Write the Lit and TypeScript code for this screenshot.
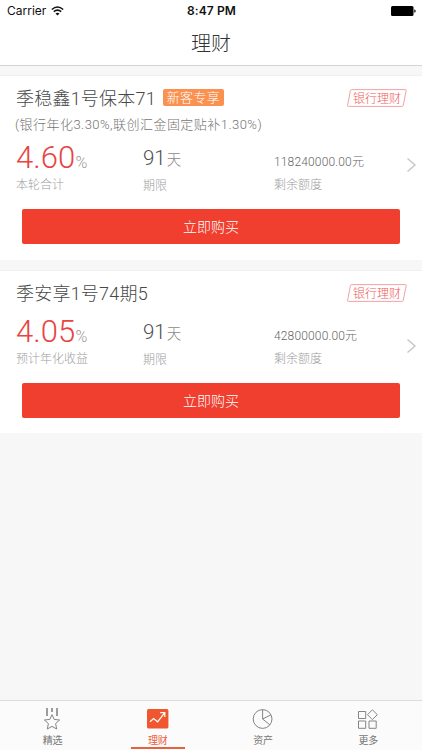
import { LitElement, html, css, svg, nothing } from "lit";
import { customElement, property } from "lit/decorators.js";
import { classMap } from "lit/directives/class-map.js";

interface Product {
  name: string;
  badge?: string;
  note?: string;
  rate: string;
  rateLabel: string;
  days: string;
  quota: string;
}

const products: Product[] = [
  { name: "季稳鑫1号保本71", badge: "新客专享", note: "(银行年化3.30%,联创汇金固定贴补1.30%)", rate: "4.60", rateLabel: "本轮合计", days: "91", quota: "118240000.00" },
  { name: "季安享1号74期5", rate: "4.05", rateLabel: "预计年化收益", days: "91", quota: "42800000.00" },
];

const tabs = [
  { label: "精选", icon: svg`<path d="M5 1v8M10 1v4M15 1v8" stroke-width="1.6"/><path d="M10 7.7l2.2 4.7 5.4.6-4 3.6 1.1 5.4-4.7-2.6-4.7 2.6 1.1-5.4-4-3.6 5.4-.6z"/>` },
  { label: "理财", icon: svg`<rect x="0" y="2" width="21.4" height="19.4" rx="1.5" fill="#f1572f" stroke="none"/><path d="M3 14.8l3.6-3.2 4 3.2 6.8-8.6M13.2 5.7h4.6v4.4" stroke="#fff" stroke-width="1.2"/>` },
  { label: "资产", icon: svg`<circle cx="9.6" cy="12" r="9.4"/><path d="M9.6 2.6V12l8.4-4.2M9.6 12l7.2 5.8"/>` },
  { label: "更多", icon: svg`<path d="M.5 4.5h7.2v7H.5zM.5 14h7.2v7.3H.5zM11 14h7.2v7.3H11zM14.4 2.8l4.9 4.9-4.9 4.9-4.9-4.9z"/>` },
];

@customElement("product-card")
class ProductCard extends LitElement {
  @property({ attribute: false }) item!: Product;

  static styles = css`
    :host { display: block; background: #fff; border-top: 1px solid #f0f0f0; padding: 13px 16px 0; }
    .head { display: flex; align-items: center; height: 20px; }
    .name { font-size: 18px; line-height: 20px; letter-spacing: 0.22px; color: #484848; white-space: nowrap; }
    .badge { margin: -3px 0 0 7px; width: 61px; height: 17px; border-radius: 2px; background: #fb9150; color: #fff; font-size: 13px; line-height: 17px; letter-spacing: 0.4px; text-align: center; }
    .tag { position: relative; margin: -2px -1px 0 auto; width: 60px; height: 18px; font-size: 12px; line-height: 20px; text-align: center; color: #ee5a5a; }
    .outline { position: absolute; inset: 0; }
    .note { margin-left: -1px; margin-top: 8px; height: 14px; font-size: 13px; line-height: 15px; letter-spacing: 0.46px; color: #747474; white-space: nowrap; }
    .facts { display: grid; grid-template-columns: 127px 131px 1fr 10px; height: 62px; margin: 11px -10px 0 0; }
    .plain { margin-top: 12px; }
    .value { height: 30px; display: flex; align-items: baseline; line-height: 30px; white-space: nowrap; }
    .caption { font-size: 12px; line-height: 15px; color: #a0a0a0; margin-top: 6px; }
    .rate { font-size: 31px; line-height: 31px; letter-spacing: 0.1px; color: #e94444; }
    .percent { font-size: 16px; color: #999; }
    .term .value { padding-top: 1px; }
    .days { font-size: 20.5px; color: #505050; }
    .unit { font-size: 14.5px; color: #8a8a8a; margin-left: 1px; }
    .quota { height: 25px; padding-top: 5px; line-height: 31px; font-size: 12px; letter-spacing: 0.15px; color: #666; }
    .arrow { width: 11px; height: 16px; margin: 15px 0 0; }
    .plain .arrow { margin-top: 22px; }
    .buy { display: block; width: 378px; height: 35px; margin: 5px 0 0 6px; padding: 1px 0 0; border: 0; border-radius: 2px; background: #f03e2f; color: #fff; font: inherit; font-size: 14px; line-height: 34px; }
  `;

  render() {
    const p = this.item;
    return html`
      <div class="head">
        <span class="name">${p.name}</span>
        ${p.badge ? html`<span class="badge">${p.badge}</span>` : nothing}
        <span class="tag">
          <svg class="outline" width="60" height="18" viewBox="0 0 60 18" fill="none" stroke="#f08a8a" stroke-width=".8"><path d="M4.6.6h53.6q1.2 0 1 1l-3 14.8q-.2 1-1.4 1H1.6q-1.3 0-1-1L3.4 1.6q.2-1 1.2-1z"/></svg>银行理财
        </span>
      </div>
      ${p.note ? html`<div class="note">${p.note}</div>` : nothing}
      <div class=${classMap({ facts: true, plain: !p.note })}>
        <div><div class="value"><span class="rate">${p.rate}</span><span class="percent">%</span></div><div class="caption">${p.rateLabel}</div></div>
        <div class="term"><div class="value"><span class="days">${p.days}</span><span class="unit">天</span></div><div class="caption">期限</div></div>
        <div><div class="value quota">${p.quota}元</div><div class="caption">剩余额度</div></div>
        <svg class="arrow" viewBox="0 0 11 16" fill="none" stroke="#c8c8c8" stroke-width="1.5"><path d="M1.5 1.5L9 8l-7.5 6.5"/></svg>
      </div>
      <button class="buy">立即购买</button>`;
  }
}

@customElement("app-root")
class AppRoot extends LitElement {
  static styles = css`
    :host { display: flex; flex-direction: column; width: 422px; height: 750px; overflow: hidden; background: #f7f7f7; font-family: Roboto, "Noto Sans CJK SC", sans-serif; font-weight: 300; }
    .status { height: 22px; background: #fff; display: grid; grid-template-columns: 1fr auto 1fr; align-items: center; padding: 0 6px 0 7px; font: 400 12px/22px Inter, sans-serif; color: #111; }
    .carrier { display: flex; align-items: center; gap: 5px; }
    .time { font-weight: 600; letter-spacing: 0.1px; }
    .battery { justify-self: end; }
    .title { height: 43px; background: #fff; border-bottom: 1px solid #d4d4d4; text-align: center; font-size: 20px; line-height: 45px; color: #333; }
    .list { flex: 1; display: flex; flex-direction: column; gap: 10px; padding-top: 9px; }
    product-card { box-sizing: border-box; }
    .first { height: 185px; }
    .second { height: 163px; }
    .tabs { height: 49px; display: grid; grid-template-columns: repeat(4, 105.25px); border-top: 1px solid #dcdcdc; background: #fbfbfb; }
    .tab { display: flex; flex-direction: column; align-items: center; font-weight: 400; font-size: 10px; line-height: 12px; color: #777; }
    .icon { margin-top: 6px; overflow: visible; }
    .label { margin-top: 5px; }
    .line { width: 54px; height: 2px; }
    .active { color: #ef5b39; }
    .active .line { background: #e5623f; }
  `;

  render() {
    return html`
      <div class="status">
        <span class="carrier">Carrier
          <svg width="13" height="10" viewBox="0 0 13 10" fill="none" stroke="#111" stroke-width="1.6"><path d="M.8 3.5q5.7-5 11.4 0M2.8 5.7q3.7-3 7.4 0"/><path d="M4.5 7.5q2-1.5 4 0l-2 2z" fill="#111" stroke="none"/></svg>
        </span>
        <span class="time">8:47 PM</span>
        <svg class="battery" width="25" height="10" viewBox="0 0 25 10"><rect width="22.5" height="10" rx="1.5"/><path d="M23.3 3.2q1.4.4 1.4 1.8t-1.4 1.8z"/></svg>
      </div>
      <div class="title">理财</div>
      <main class="list">
        ${products.map((p, i) => html`<product-card class=${i === 0 ? "first" : "second"} .item=${p}></product-card>`)}
      </main>
      <nav class="tabs">
        ${tabs.map((t, i) => html`
          <div class=${classMap({ tab: true, active: i === 1 })}>
            <svg class="icon" width="21" height="23" viewBox="0 0 21 23" fill="none" stroke="#858585" stroke-width="1">${t.icon}</svg>
            <span class="label">${t.label}</span>
            <span class="line"></span>
          </div>`)}
      </nav>`;
  }
}
